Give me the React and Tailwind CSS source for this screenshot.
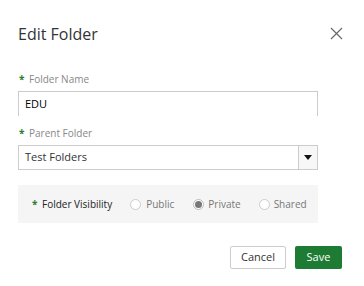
export default function App() {
  return (
    <div className="w-[364px] h-[286px] bg-white relative" style={{fontFamily: '"Open Sans", sans-serif'}}>
      {/* header */}
      <div className="flex items-center justify-between pl-[18px] pr-[21px] pt-[21px] h-[46px]">
        <h2 className="text-[16px] leading-6 text-[#333]">Edit Folder</h2>
        <svg width="13" height="13" viewBox="0 0 13 13" className="text-[#666]">
          <path d="M1 1L12 12M12 1L1 12" stroke="currentColor" strokeWidth="1.1" />
        </svg>
      </div>

      <div className="px-[18px] pt-[25px] w-[336px]">
        <label className="flex items-center text-[10px] text-[#888] leading-4">
          <span className="text-[#2e7d32] font-bold w-[11px] pl-[1px]">*</span>Folder Name
        </label>
        <div className="mt-[4px] h-[25px] border-t border-x border-[#ccc] flex items-center px-[6px] text-[11px] text-black">
          EDU
        </div>

        <label className="flex items-center text-[10px] text-[#888] leading-4 mt-[9px]">
          <span className="text-[#2e7d32] font-bold w-[11px] pl-[1px]">*</span>Parent Folder
        </label>
        <div className="mt-[4px] h-[25px] border border-[#ccc] flex items-center text-[11px] text-[#333]">
          <span className="flex-1 px-[6px]">Test Folders</span>
          <span className="w-[19px] h-full border-l border-[#ccc] bg-[#f7f7f7] flex items-center justify-center">
            <svg width="8" height="5" viewBox="0 0 8 5"><path d="M0 0H8L4 5Z" fill="#111" /></svg>
          </span>
        </div>

        <div className="mt-[15px] h-[38px] bg-[#f5f5f5] flex items-center pl-[14px] text-[10px] whitespace-nowrap">
          <span className="text-[#2e7d32] font-bold w-[10px] shrink-0">*</span>
          <span className="text-[#222] shrink-0">Folder Visibility</span>
          <span className="flex items-center ml-[18px] text-[#777]">
            <span className="w-[11px] h-[11px] rounded-full border border-[#ccc] bg-white mr-[5px]" />Public
          </span>
          <span className="flex items-center ml-[19px] text-[#777]">
            <span className="w-[11px] h-[11px] rounded-full border border-[#bbb] bg-white mr-[4px] flex items-center justify-center">
              <span className="w-[7px] h-[7px] rounded-full bg-[#777]" />
            </span>Private
          </span>
          <span className="flex items-center ml-[18px] text-[#777]">
            <span className="w-[11px] h-[11px] rounded-full border border-[#ccc] bg-white mr-[4px]" />Shared
          </span>
        </div>
      </div>

      <div className="flex justify-end gap-[9px] pr-[22px] mt-[23px]">
        <button className="w-[56px] h-[23px] border border-[#ccc] rounded-[2px] bg-white text-[11px] text-[#333]">Cancel</button>
        <button className="w-[47px] h-[23px] rounded-[2px] bg-[#1e7b34] text-[11px] text-white">Save</button>
      </div>
    </div>
  );
}
